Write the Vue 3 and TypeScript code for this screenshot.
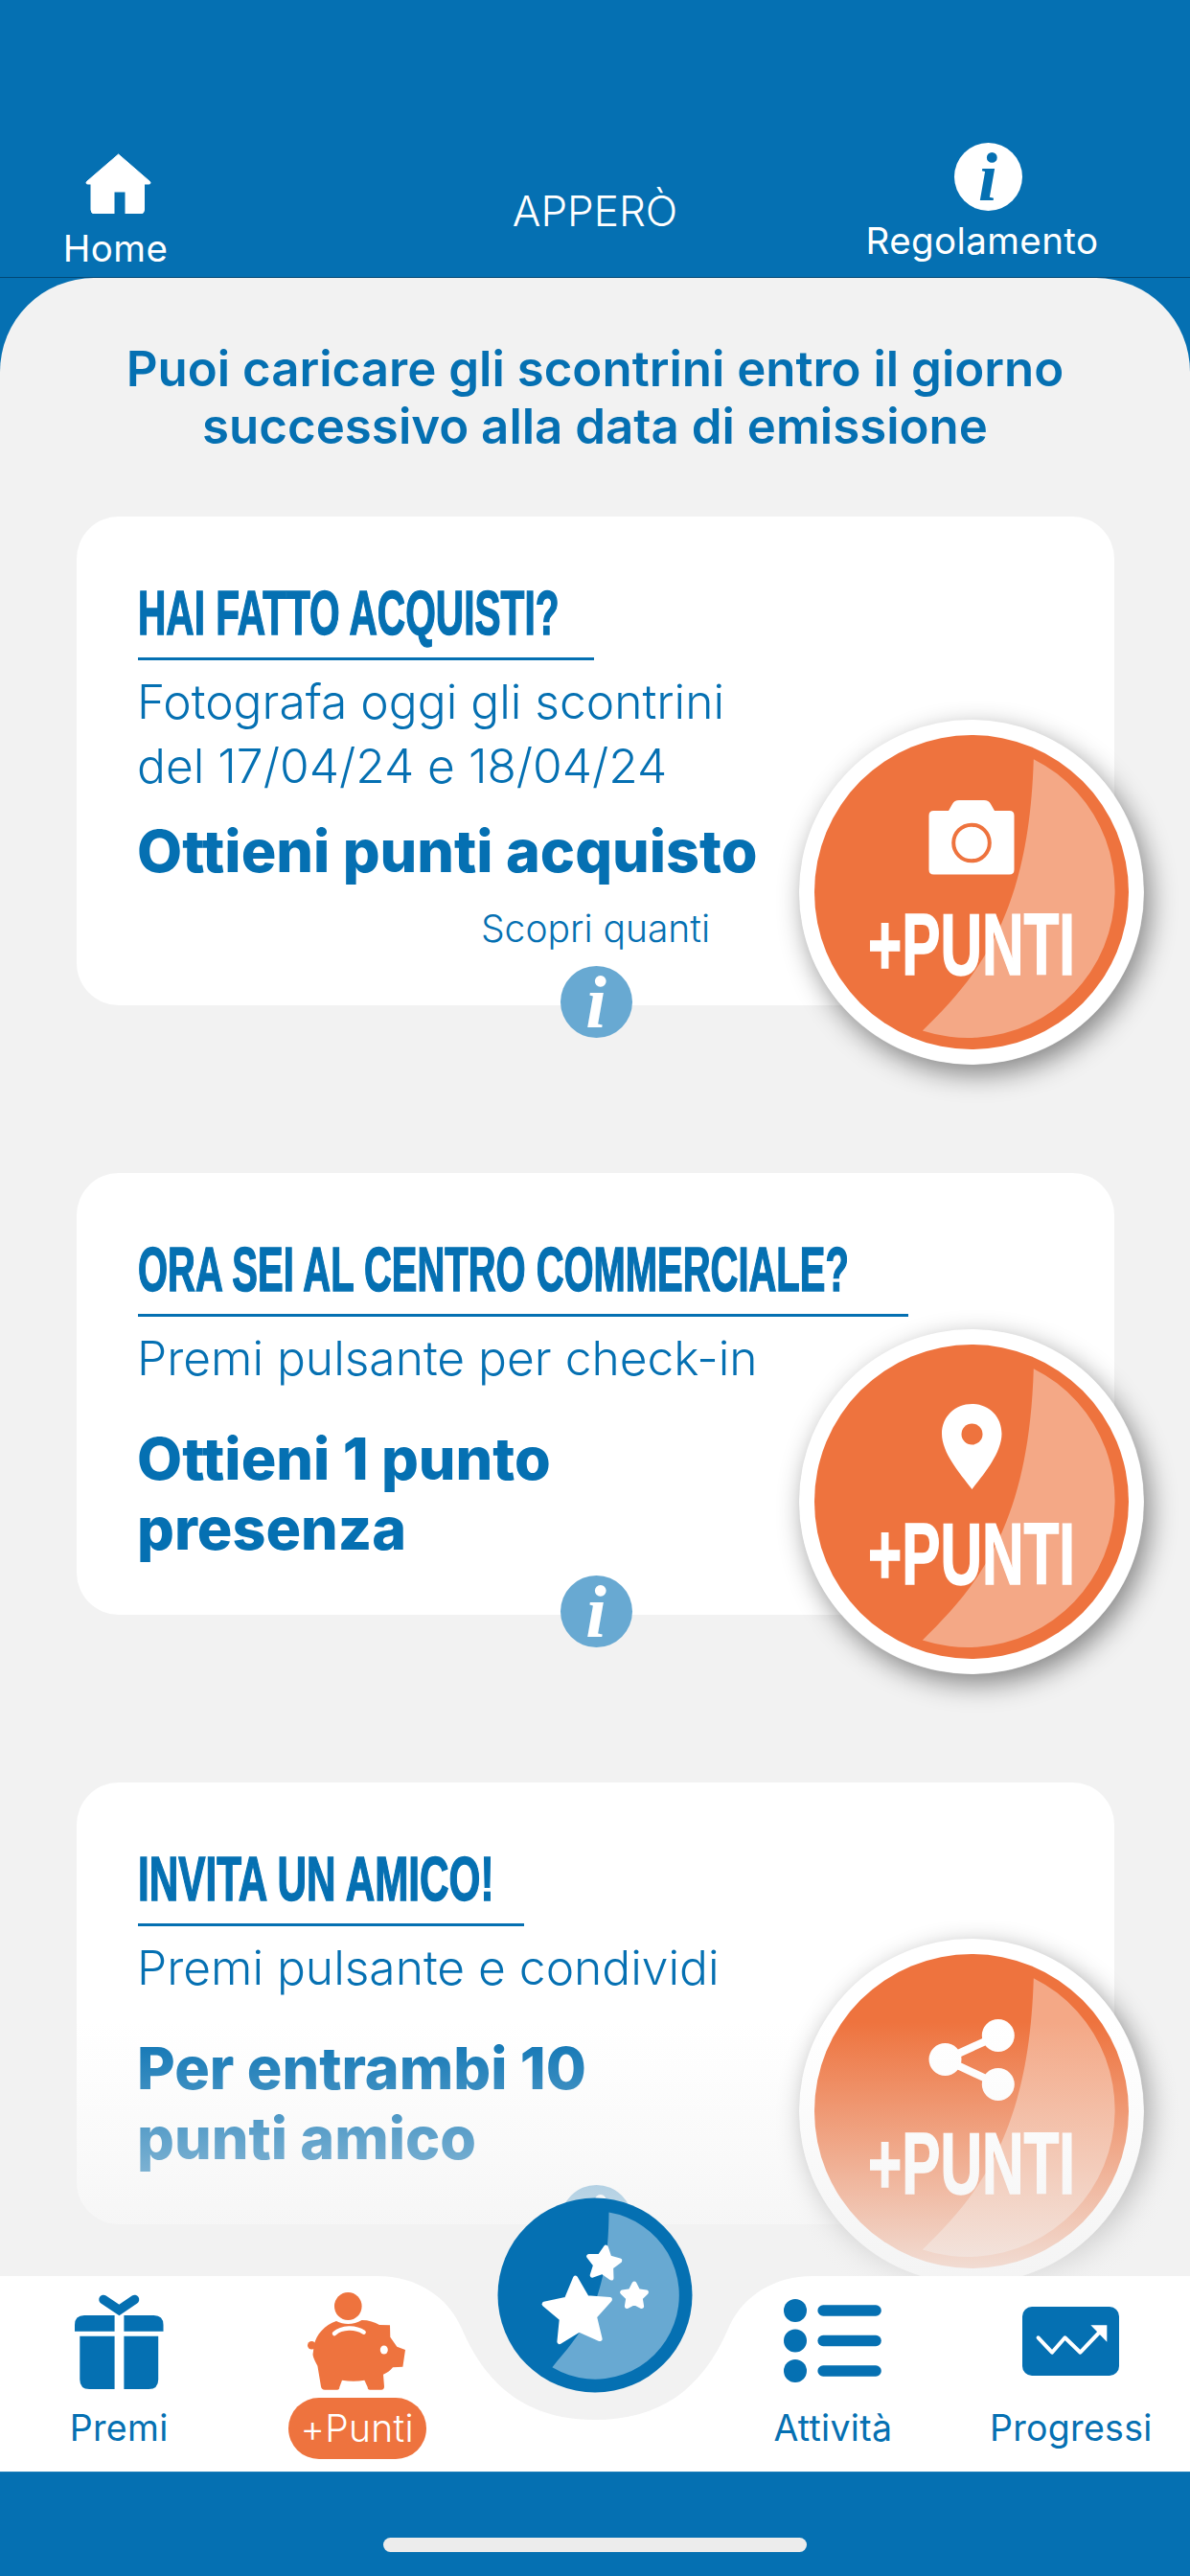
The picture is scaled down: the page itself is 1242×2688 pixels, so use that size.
<template>
  <div class="screen">
    <header class="head">
      <div class="head-item home">
        <svg class="home-icon" viewBox="0 0 70 64">
          <path d="M34.6 2 L67.5 30.5 Q69 33 66 33 L61.5 33 L61.5 60 Q61.5 64 57.5 64 L42 64 L42 41 L30 41 L30 64 L10 64 Q6 64 6 60 L6 33 L3 33 Q0 33 1.5 30.5 Z" fill="#fff" stroke="#fff" stroke-linejoin="round" stroke-width="1" />
        </svg>
        <span class="head-label">Home</span>
      </div>
      <div class="head-title">APPERÒ</div>
      <div class="head-item rules">
        <span class="info-dot white"><span class="info-i">i</span></span>
        <span class="head-label">Regolamento</span>
      </div>
    </header>

    <main class="main">
      <h1 class="notice">
        Puoi caricare gli scontrini entro il giorno<br />
        successivo alla data di emissione
      </h1>

      <div class="cards">
        <section
          v-for="card in cards"
          :key="card.title"
          class="card"
          :class="{ long: card.more }"
        >
          <div class="card-body">
            <h2 class="card-title" :style="{ transform: `scaleX(${card.stretch})` }">{{ card.title }}</h2>
            <div class="card-rule" :style="{ width: card.rule + 'px' }"></div>
            <p v-for="line in card.lines" :key="line" class="sub">{{ line }}</p>
            <p v-for="line in card.gain" :key="line" class="gain">{{ line }}</p>
          </div>
          <div v-if="card.more" class="more">{{ card.more }}</div>

          <span class="info-dot soft"><span class="info-i">i</span></span>

          <div class="badge">
            <svg class="badge-art" viewBox="-180 -180 360 360">
              <circle r="179.5" fill="#fff" />
              <circle r="164" fill="#ee733e" />
              <path
                d="M64.8 -138.8 A153.5 153.5 0 0 1 -51.2 144.5 C10 85 60 20 64.8 -138.8 Z"
                fill="#f4a886"
              />
              <!-- camera -->
              <g v-if="card.icon === 'camera'">
                <path
                  d="M-39.5 -85 L-24 -85 L-20 -92 Q-18 -96 -13 -96 L13 -96 Q18 -96 20 -92 L24 -85 L39.5 -85 Q44.5 -85 44.5 -80 L44.5 -23.5 Q44.5 -18.5 39.5 -18.5 L-39.5 -18.5 Q-44.5 -18.5 -44.5 -23.5 L-44.5 -80 Q-44.5 -85 -39.5 -85 Z"
                  fill="#fff"
                />
                <circle cy="-51.5" r="18.8" fill="#fff" stroke="#ee733e" stroke-width="4" />
              </g>
              <!-- pin -->
              <g v-else-if="card.icon === 'pin'">
                <path
                  d="M0.5 -13 C-10 -27 -31 -50 -31 -71 C-31 -89 -17 -102 0.5 -102 C18 -102 31.5 -89 31.5 -71 C31.5 -50 11 -27 0.5 -13 Z"
                  fill="#fff"
                />
                <circle cx="0.5" cy="-70.5" r="11" fill="#ee733e" />
              </g>
              <!-- share -->
              <g v-else fill="#fff" stroke="#fff">
                <path d="M27.8 -79 L-27.5 -54 L27.8 -28" fill="none" stroke-width="8" />
                <circle cx="27.8" cy="-79" r="17" stroke="none" />
                <circle cx="-27.5" cy="-54" r="17" stroke="none" />
                <circle cx="27.8" cy="-28" r="17" stroke="none" />
              </g>
            </svg>
            <span class="badge-text">+PUNTI</span>
          </div>
        </section>
      </div>

      <div class="fade"></div>
    </main>

    <nav class="nav">
      <svg class="notch" viewBox="0 0 1242 150">
        <path d="M394 0 C435 0 468 22 482 55 C510 120 555 150 621 150 C687 150 732 120 760 55 C774 22 807 0 848 0 Z" fill="#f2f2f2" />
      </svg>

      <div class="tab">
        <div class="tab-icon">
          <svg width="93" height="101" viewBox="0 0 93 101">
            <path d="M30 7.5 L46.4 18.5 L62.5 7.5" fill="none" stroke="#0570b2" stroke-width="9.5" stroke-linecap="round" />
            <path d="M0 40.7 L0 34 Q0 24 10 24 L41.6 24 L41.6 40.7 Z M51.4 24 L82.5 24 Q92.5 24 92.5 34 L92.5 40.7 L51.4 40.7 Z" fill="#0570b2" />
            <path d="M5.3 45.7 L41.6 45.7 L41.6 101 L15.3 101 Q5.3 101 5.3 91 Z M51.4 45.7 L87.2 45.7 L87.2 91 Q87.2 101 77.2 101 L51.4 101 Z" fill="#0570b2" />
          </svg>
        </div>
        <span class="tab-label">Premi</span>
      </div>

      <div class="tab">
        <div class="tab-icon">
          <svg width="103" height="102" viewBox="0 0 103 102">
            <path
              d="M6.8 55 C9 44 18 34 30 30 C38 34 48 34 56.6 29 C64 29 70 31 75 34 L86 34.3 L86.3 46.7 L93.3 56.7 L102 60 L99.4 77.7 L89 78.3 C86 82 83 84 79 85.7 L80 98.3 Q80 101.7 77 101.7 L65 101.7 Q62.7 101.7 62.7 99 L59.4 91.7 C52 93 44 93 36 91.7 L33.3 99 Q33.3 101.7 31 101.7 L18 101.7 Q14.5 101.7 14 98.3 L10.4 76.7 C8 72 6 69 5.5 65 Z"
              fill="#ee733e"
            />
            <circle cx="4.3" cy="55.3" r="4.3" fill="#ee733e" />
            <ellipse cx="42.3" cy="14.5" rx="14.3" ry="14.5" fill="#ee733e" />
            <path d="M28 43 C36 36 50 36 58.6 41.7" fill="none" stroke="#fff" stroke-width="4.5" stroke-linecap="round" />
            <ellipse cx="79.8" cy="60" rx="4" ry="4.5" fill="#fff" />
          </svg>
        </div>
        <span class="tab-label pill">+Punti</span>
      </div>

      <div class="tab star-slot">
        <svg class="star-btn" viewBox="-102 -102 204 204">
          <circle r="101.5" fill="#0570b2" />
          <path d="M14.5 -86.4 A87.6 87.6 0 1 1 -44.6 75.3 C-15 40 14 10 14.5 -86.4 Z" fill="#68a9d2" />
          <polygon v-for="s in stars" :key="s.r" :points="starPoints(s.x, s.y, s.r, s.rot)" fill="#fff" stroke="#fff" stroke-width="5" stroke-linejoin="round" />
        </svg>
      </div>

      <div class="tab">
        <div class="tab-icon">
          <svg width="102" height="87" viewBox="0 0 102 87">
            <g fill="#0570b2">
              <circle cx="12" cy="12" r="12" />
              <circle cx="12" cy="43.5" r="12" />
              <circle cx="12" cy="75" r="12" />
              <rect x="35.4" y="6.3" width="66.4" height="11.4" rx="5.7" />
              <rect x="35.4" y="37.8" width="66.4" height="11.4" rx="5.7" />
              <rect x="35.4" y="69.3" width="66.4" height="11.4" rx="5.7" />
            </g>
          </svg>
        </div>
        <span class="tab-label">Attività</span>
      </div>

      <div class="tab">
        <div class="tab-icon">
          <svg width="101" height="72" viewBox="0 0 101 72">
            <rect width="101" height="72" rx="10" fill="#0570b2" />
            <path d="M16.6 32.3 L31 47.7 L44.5 32.3 L60.5 47.7 L82 25" fill="none" stroke="#fff" stroke-width="4" stroke-linecap="round" stroke-linejoin="round" />
            <path d="M71.4 19.3 L88.3 19.3 L88.3 36.7 Z" fill="#fff" />
          </svg>
        </div>
        <span class="tab-label">Progressi</span>
      </div>
    </nav>

    <footer class="bottom">
      <div class="home-bar"></div>
    </footer>
  </div>
</template>

<script setup lang="ts">
interface PointsCard {
  title: string
  stretch: number
  rule: number
  lines: string[]
  gain: string[]
  more?: string
  icon: 'camera' | 'pin' | 'share'
}

const cards: PointsCard[] = [
  {
    title: 'HAI FATTO ACQUISTI?',
    stretch: 0.635,
    rule: 476,
    lines: ['Fotografa oggi gli scontrini', 'del 17/04/24 e 18/04/24'],
    gain: ['Ottieni punti acquisto'],
    more: 'Scopri quanti',
    icon: 'camera',
  },
  {
    title: 'ORA SEI AL CENTRO COMMERCIALE?',
    stretch: 0.624,
    rule: 804,
    lines: ['Premi pulsante per check-in'],
    gain: ['Ottieni 1 punto', 'presenza'],
    icon: 'pin',
  },
  {
    title: 'INVITA UN AMICO!',
    stretch: 0.66,
    rule: 403,
    lines: ['Premi pulsante e condividi'],
    gain: ['Per entrambi 10', 'punti amico'],
    icon: 'share',
  },
]

const stars = [
  { x: -18, y: 18, r: 36, rot: -4 },
  { x: 9, y: -33, r: 17, rot: 8 },
  { x: 41, y: 1, r: 13, rot: 0 },
]

function starPoints(cx: number, cy: number, r: number, rot: number): string {
  const pts: string[] = []
  for (let i = 0; i < 10; i++) {
    const radius = i % 2 === 0 ? r : r * 0.5
    const a = ((rot + i * 36 - 90) * Math.PI) / 180
    pts.push(`${(cx + radius * Math.cos(a)).toFixed(1)},${(cy + radius * Math.sin(a)).toFixed(1)}`)
  }
  return pts.join(' ')
}
</script>

<style scoped>
.screen {
  --blue: #0570b2;
  --orange: #ee733e;
  --grey: #f2f2f2;
  width: 1242px;
  height: 2688px;
  display: flex;
  flex-direction: column;
  overflow: hidden;
  background: var(--blue);
  color: var(--blue);
  font-family: Inter, "Liberation Sans", sans-serif;
}

/* header */
.head {
  height: 290px;
  box-sizing: border-box;
  flex-shrink: 0;
  display: grid;
  grid-template-columns: 434px 1fr 434px;
  border-bottom: 1px solid rgba(0, 40, 70, 0.55);
  color: #fff;
}
.head-item {
  display: flex;
  flex-direction: column;
  align-items: center;
}
.home {
  width: 248px;
  padding-top: 159px;
}
.home-icon {
  width: 70px;
  height: 64px;
}
.head-label {
  font-size: 38.5px;
  line-height: 44px;
  letter-spacing: 0.4px;
}
.home .head-label {
  margin-top: 14px;
  margin-left: -7px;
}
.rules {
  padding-top: 149px;
}
.rules .info-dot {
  margin-left: 12px;
}
.rules .head-label {
  margin-top: 9px;
}
.head-title {
  padding-top: 196px;
  text-align: center;
  font-size: 44px;
  line-height: 48px;
  font-weight: 300;
}

/* info icon */
.info-dot {
  display: flex;
  align-items: center;
  justify-content: center;
  border-radius: 50%;
  font-family: "Liberation Serif", serif;
  font-weight: 700;
  font-style: italic;
}
.info-dot.white {
  width: 71px;
  height: 71px;
  background: #fff;
  color: var(--blue);
  font-size: 72px;
}
.info-dot.soft {
  position: absolute;
  left: 50%;
  bottom: -34px;
  width: 75px;
  height: 75px;
  margin-left: -37px;
  background: #68a9d2;
  color: #fff;
  font-size: 78px;
}
.info-i {
  line-height: 1;
}

/* main */
.main {
  position: relative;
  flex: 1;
  min-height: 0;
  overflow: hidden;
  padding-top: 65px;
  background: var(--grey);
  border-radius: 98px 98px 0 0;
}
.notice {
  margin: 0 0 64px;
  text-align: center;
  font-size: 51px;
  line-height: 60px;
  font-weight: 600;
}
.cards {
  display: flex;
  flex-direction: column;
  gap: 175px;
  padding: 0 79px 0 80px;
}
.card {
  position: relative;
  background: #fff;
  border-radius: 44px;
  padding-bottom: 53px;
}
.card.long {
  padding-bottom: 58px;
}
.card-body {
  padding: 69px 0 0 64px;
}
.card-title {
  margin: 0;
  font-family: "Liberation Sans", Arial, sans-serif;
  font-size: 64px;
  line-height: 64px;
  font-weight: 700;
  white-space: nowrap;
  transform-origin: left center;
  -webkit-text-stroke: 1.5px var(--blue);
}
.card-rule {
  height: 3px;
  margin-top: 14px;
  margin-bottom: 10px;
  background: var(--blue);
}
.sub {
  margin: 0 0 0 -1px;
  font-size: 49.7px;
  line-height: 67px;
  font-weight: 300;
}
.gain {
  margin: 0 0 0 -1px;
  font-size: 61px;
  line-height: 73px;
  font-weight: 800;
}
.sub + .gain {
  margin-top: 35px;
}
.long .sub + .gain {
  margin-top: 19px;
}
.more {
  margin-top: 22px;
  text-align: center;
  font-size: 39px;
  line-height: 44px;
  font-weight: 300;
}
.badge {
  position: absolute;
  right: -31px;
  bottom: -62px;
  width: 360px;
  height: 360px;
  border-radius: 50%;
  box-shadow: 6px 10px 28px rgba(0, 0, 0, 0.45);
}
.badge-art {
  display: block;
  width: 360px;
  height: 360px;
}
.badge-text {
  position: absolute;
  left: 0;
  right: 0;
  top: 190px;
  text-align: center;
  font-family: "Liberation Sans", Arial, sans-serif;
  font-size: 90px;
  line-height: 90px;
  font-weight: 700;
  color: #fff;
  transform: scaleX(0.67);
  -webkit-text-stroke: 1.5px #fff;
}
.fade {
  position: absolute;
  left: 0;
  right: 0;
  bottom: 0;
  height: 265px;
  background: linear-gradient(rgba(242, 242, 242, 0), rgba(242, 242, 242, 0.85));
  pointer-events: none;
}

/* bottom nav */
.nav {
  position: relative;
  z-index: 2;
  flex-shrink: 0;
  height: 204px;
  box-sizing: border-box;
  padding-top: 17px;
  display: grid;
  grid-template-columns: repeat(5, 1fr);
  background: #fff;
}
.notch {
  position: absolute;
  left: 0;
  top: 0;
  width: 1242px;
  height: 150px;
}
.tab {
  position: relative;
  display: flex;
  flex-direction: column;
  align-items: center;
}
.tab-icon {
  height: 101px;
  display: flex;
  align-items: center;
  justify-content: center;
}
.tab-label {
  margin-top: 9px;
  font-size: 37.5px;
  line-height: 64px;
  font-weight: 400;
  letter-spacing: 0.3px;
  white-space: nowrap;
}
.tab-label.pill {
  width: 144px;
  text-align: center;
  border-radius: 32px;
  background: var(--orange);
  color: #fff;
  font-size: 39px;
  font-weight: 300;
}
.star-btn {
  position: absolute;
  left: 50%;
  top: -99px;
  width: 204px;
  height: 204px;
  margin-left: -102px;
}

.bottom {
  height: 109px;
  flex-shrink: 0;
  display: flex;
  justify-content: center;
  padding-top: 68px;
  box-sizing: border-box;
  border-top: 1px solid rgba(255, 255, 255, 0.1);
}
.home-bar {
  width: 442px;
  height: 15px;
  border-radius: 8px;
  background: #ececec;
}
</style>

<style>
html,
body {
  margin: 0;
  background: #0570b2;
}
</style>
